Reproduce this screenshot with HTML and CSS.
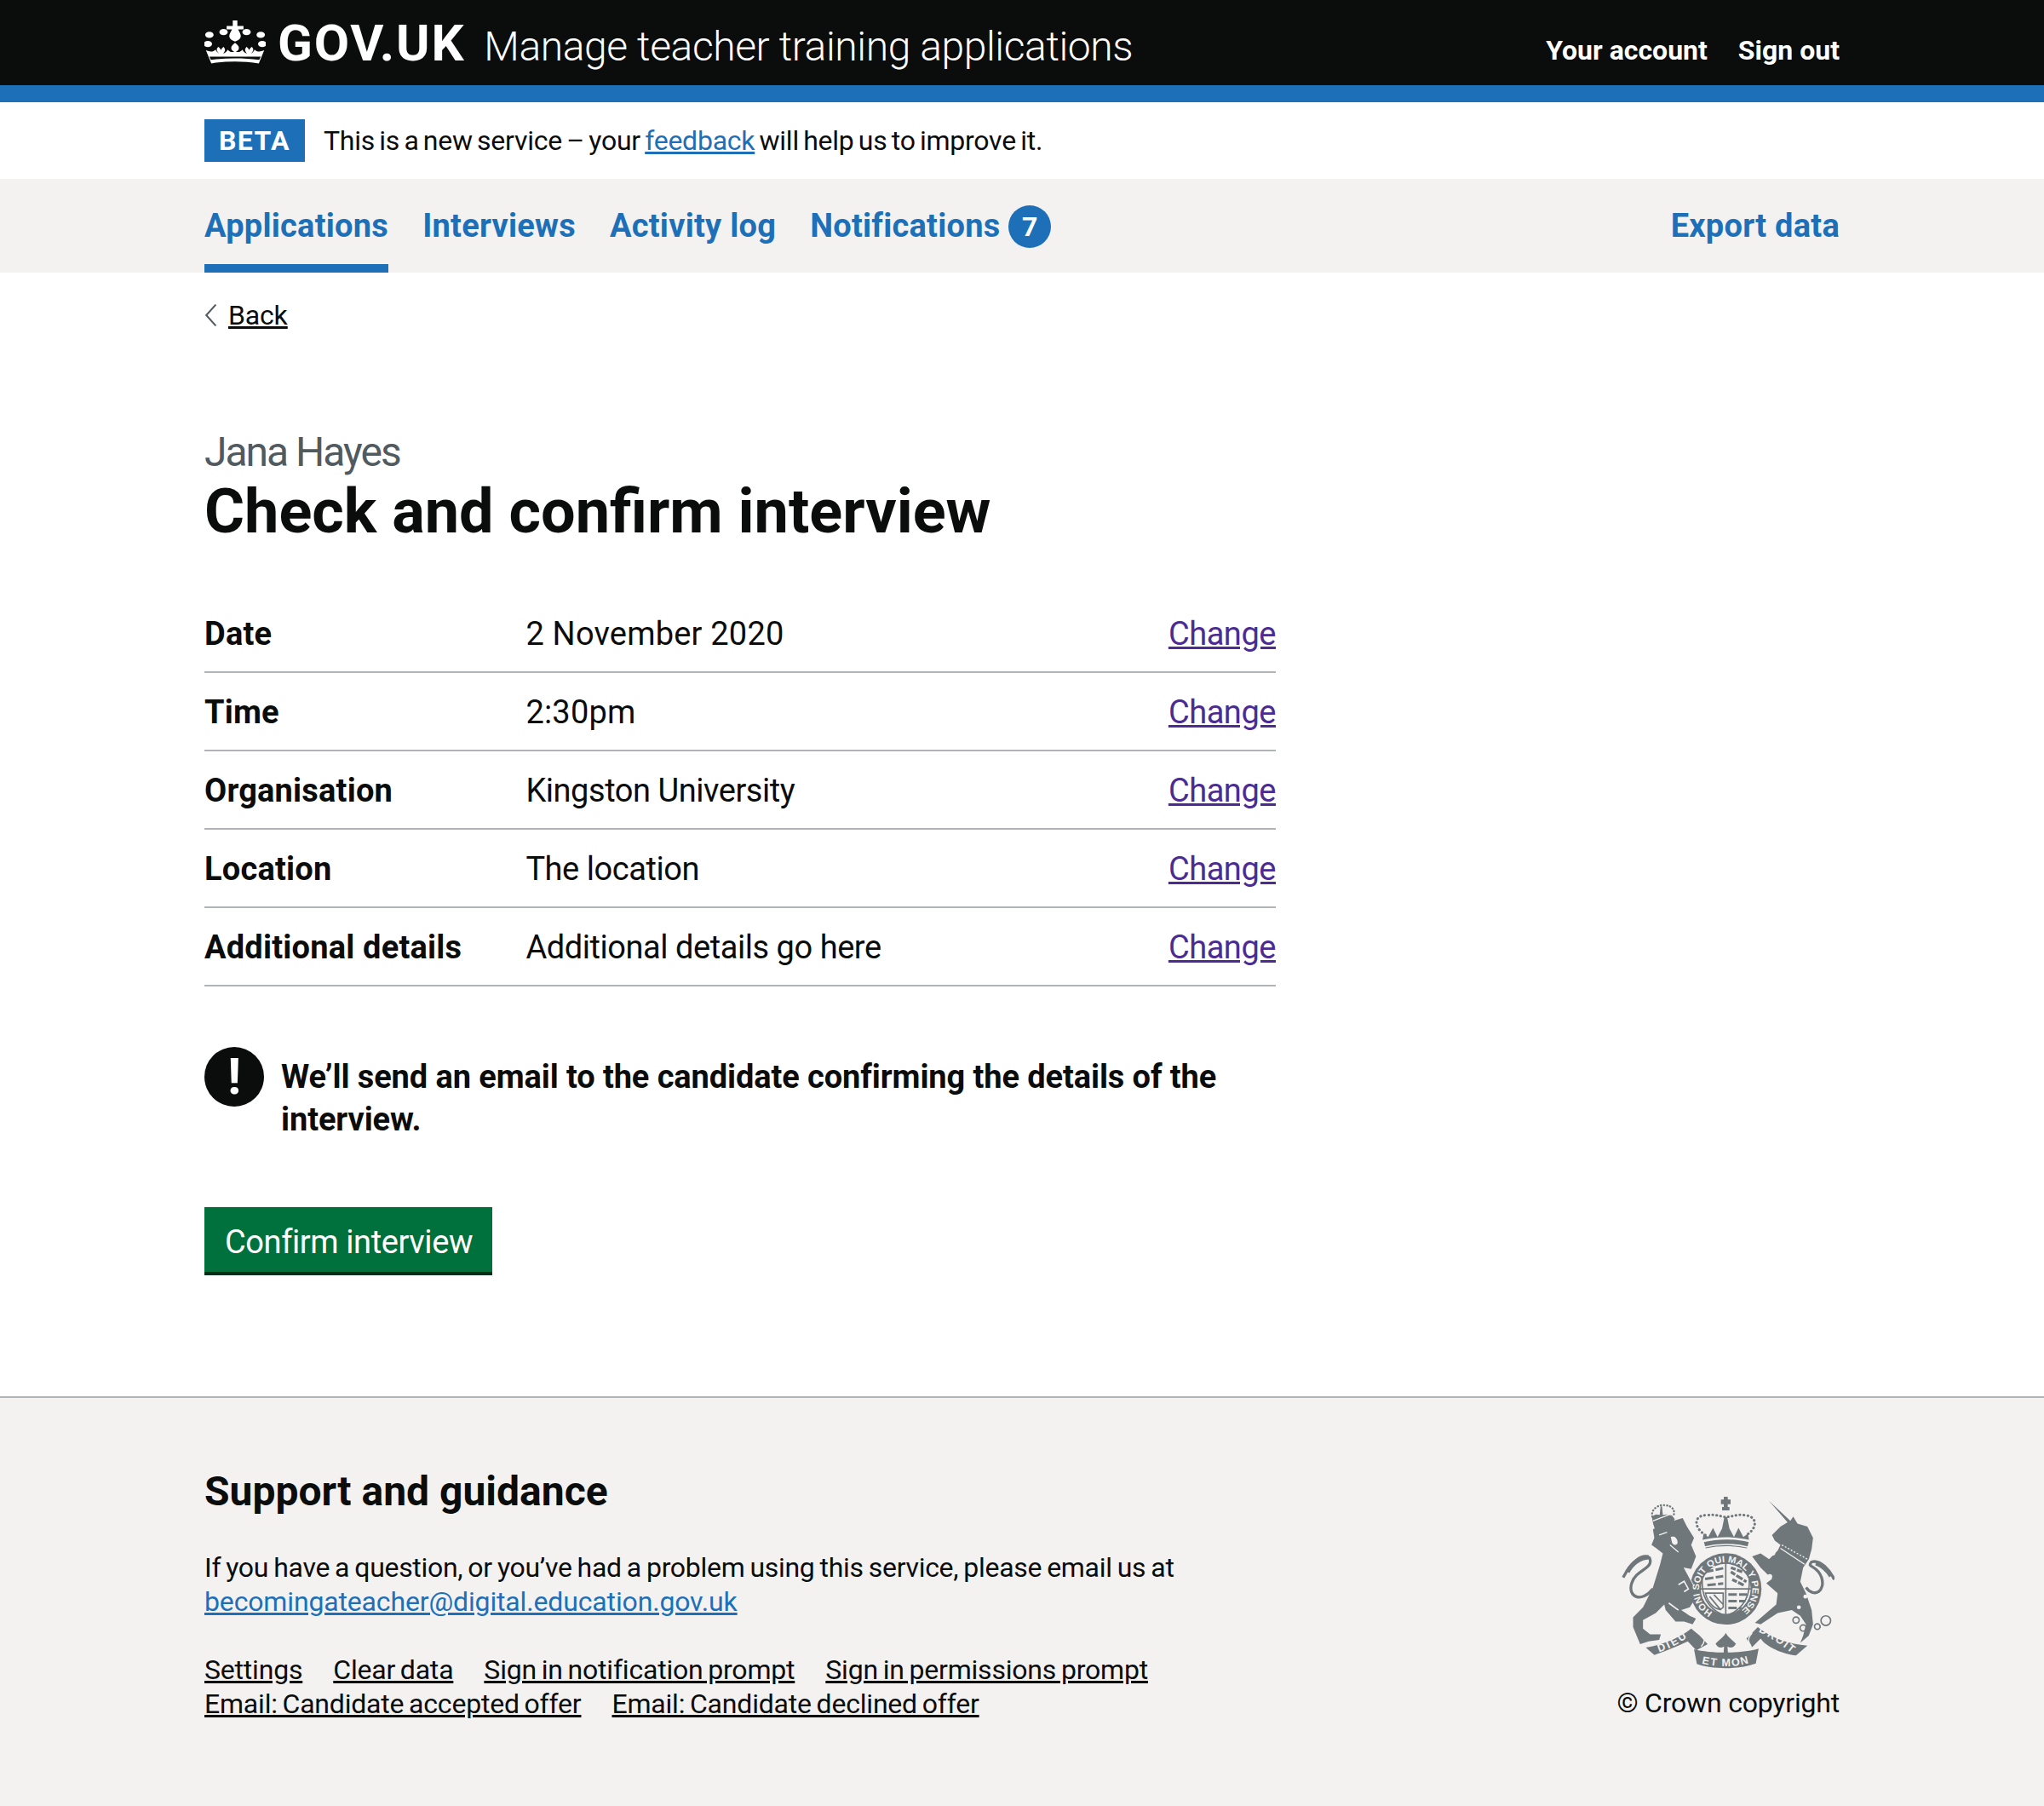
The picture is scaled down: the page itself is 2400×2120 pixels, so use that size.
FILE: index.html
```html
<!DOCTYPE html>
<html lang="en">
<head>
<meta charset="utf-8">
<title>Check and confirm interview</title>
<link rel="stylesheet" href="styles.css">
</head>
<body>
<header class="masthead">
  <div class="wrap masthead-inner">
    <a class="logo" href="#">
      <svg class="crown" viewBox="0 0 160 160" preserveAspectRatio="none" aria-hidden="true">
        <g fill="#fff">
          <path d="M74 0h12v20h16v12H88l5 14c4 12 3 22-13 30-16-8-17-18-13-30l5-14H58V20h16z"/>
          <circle cx="13" cy="52" r="11"/><circle cx="50" cy="42" r="11"/><circle cx="110" cy="42" r="11"/><circle cx="147" cy="52" r="11"/>
          <circle cx="9" cy="85" r="11"/><circle cx="151" cy="85" r="11"/>
          <path d="M18 155 4 108c10 6 20 6 25-3 3 8 6 12 9 14-4-5-9-14-2-24 5 4 6 8 7 12 1-4 3-8 7-12 7 10 3 19-1 24 5-2 9-6 12-14 4 8 10 11 17 7-6-3-8-7-8-13 0-5 3-11 10-18 7 7 10 13 10 18 0 6-2 10-8 13 7 4 13 1 17-7 3 8 7 12 12 14-4-5-8-14-1-24 4 4 6 8 7 12 1-4 2-8 7-12 7 10 2 19-2 24 3-2 6-6 9-14 5 9 15 9 25 3l-14 47c-40-9-84-9-124 0zm-1-13c41-7 85-7 126 0l4-11H13z"/>
        </g>
      </svg>
      <span class="logo-word">GOV.UK</span>
      <span class="service">Manage teacher training applications</span>
    </a>
    <nav class="account">
      <a href="#">Your account</a>
      <a href="#">Sign out</a>
    </nav>
  </div>
</header>

<div class="phase">
  <div class="wrap phase-inner">
    <strong class="tag">BETA</strong>
    <span class="phase-text">This is a new service – your <a class="link" href="#">feedback</a> will help us to improve it.</span>
  </div>
</div>

<nav class="primary">
  <div class="wrap primary-inner">
    <ul class="primary-list">
      <li><a class="primary-link current" href="#">Applications</a></li>
      <li><a class="primary-link" href="#">Interviews</a></li>
      <li><a class="primary-link" href="#">Activity log</a></li>
      <li><a class="primary-link" href="#">Notifications <span class="count">7</span></a></li>
    </ul>
    <a class="primary-link" href="#">Export data</a>
  </div>
</nav>

<div class="wrap">
  <a class="back" href="#"><svg class="chev" viewBox="0 0 12 22" aria-hidden="true"><path d="M11 .5 1.5 11 11 21.5" fill="none" stroke="#505a5f" stroke-width="1.7"/></svg><span>Back</span></a>

  <main class="content">
    <span class="caption">Jana Hayes</span>
    <h1 class="title">Check and confirm interview</h1>

    <dl class="summary">
      <div class="row"><dt>Date</dt><dd class="num">2 November 2020</dd><dd class="act"><a href="#">Change</a></dd></div>
      <div class="row"><dt>Time</dt><dd class="num">2:30pm</dd><dd class="act"><a href="#">Change</a></dd></div>
      <div class="row"><dt>Organisation</dt><dd>Kingston University</dd><dd class="act"><a href="#">Change</a></dd></div>
      <div class="row"><dt>Location</dt><dd>The location</dd><dd class="act"><a href="#">Change</a></dd></div>
      <div class="row"><dt>Additional details</dt><dd>Additional details go here</dd><dd class="act"><a href="#">Change</a></dd></div>
    </dl>

    <div class="warning">
      <span class="warn-icon">!</span>
      <strong class="warn-text">We’ll send an email to the candidate confirming the details of the interview.</strong>
    </div>

    <button class="button" type="button">Confirm interview</button>
  </main>
</div>

<footer class="footer">
  <div class="wrap footer-inner">
    <div class="footer-main">
      <h2 class="footer-title">Support and guidance</h2>
      <p class="footer-text">If you have a question, or you’ve had a problem using this service, please email us at <a class="link email" href="#">becomingateacher@digital.education.gov.uk</a></p>
      <ul class="footer-links">
        <li><a href="#">Settings</a></li>
        <li><a href="#">Clear data</a></li>
        <li><a href="#">Sign in notification prompt</a></li>
        <li><a href="#">Sign in permissions prompt</a></li>
        <li><a href="#">Email: Candidate accepted offer</a></li>
        <li><a href="#">Email: Candidate declined offer</a></li>
      </ul>
    </div>
    <div class="footer-meta">
      <svg class="crest" viewBox="130 80 750 610" role="img" aria-label="Royal coat of arms">
        <defs>
          <path id="ring" d="M451 487A94 94 0 1 1 543 487"/>
          <path id="rib1" d="M262 628C300 615 340 595 372 566"/>
          <path id="rib2" d="M412 668C470 682 530 682 582 665"/>
          <path id="rib3" d="M612 556C650 575 690 600 730 632"/>
        </defs>
        <g fill="#6f777b">
          <path d="M240 195 280 175 345 155 360 185 385 225 375 250 392 290 375 335 350 330 385 395 395 430 370 470 340 480 370 500 392 510 380 530 350 520 320 520 285 480 280 460 250 490 205 515 205 545 230 565 268 565 262 585 225 590 195 600 170 540 170 505 205 470 240 400 265 320 275 280 250 260 235 250 245 225Z"/>
          <path d="M650 95 725 165 735 150 750 175 785 185 805 225 800 265 790 300 770 330 760 380 780 420 800 480 805 530 790 570 760 595 770 570 780 530 760 500 730 480 680 490 620 530 600 525 640 490 675 460 680 420 640 385 660 370 640 350 620 330 590 290 620 280 650 300 680 270 690 250 670 235 660 215 690 185 715 170Z"/>
          <path d="M490 80h14v10h10v16h-10v10h6v12h-26v-12h6v-10h-10V90h10z"/>
          <path d="M420 240c50-12 105-12 158 0l-6 22c-48-10-98-10-146 0z"/>
          <path d="M415 232l4-22 16 12 17-32 16 32 16-30 8-40h10l8 40 16 30 16-32 17 32 16-12 4 22c-55-12-110-12-164 0z"/>
          <circle cx="497" cy="405" r="126"/>
          <path d="M236 150l14-8 14 2 3-30h5l3 30 14-2 18 4 10 12-8 20-60 22-8-24z"/>
          <path d="M215 612C280 600 330 580 375 545l30 25 28 30-40 22-30-32C320 610 270 630 245 638Z"/>
          <path d="M785 605C720 600 660 580 610 540l-40 40 20 30 30-30C640 610 700 635 745 640Z"/>
          <path d="M385 618c60 16 170 16 228-2l-10 52c-60 22-150 22-208 2z"/>
          <path d="M497 560c6 14 22 24 36 38-8 16-20 16-30 10l2 28h-16l2-28c-10 6-22 6-30-10 14-14 30-24 36-38z"/>
        </g>
        <g fill="none" stroke="#6f777b">
          <path stroke-width="10" d="M240 405C200 455 150 435 165 385 180 335 245 335 228 295 205 280 165 305 135 365"/>
          <path stroke-width="16" d="M150 345C170 310 195 295 225 293"/>
          <path stroke-width="10" d="M780 400C810 440 850 410 835 365 820 320 780 330 800 310 830 300 865 340 880 372"/>
          <path stroke-width="14" d="M815 315C840 325 855 340 868 360"/>
          <path stroke-width="9" stroke-dasharray="1 13" stroke-linecap="round" d="M425 215C385 190 380 145 430 145 470 140 490 155 497 150 510 155 530 140 565 145 610 150 610 190 570 215"/>
          <path stroke-width="7" stroke-dasharray="1 10" stroke-linecap="round" d="M238 150C230 120 270 105 280 110 310 110 320 130 312 148"/>
        </g>
        <g fill="none" stroke="#f3f2f1">
          <path stroke-width="3" d="M350 330 385 395"/>
          <path stroke-width="5" d="M418 258c50-12 110-12 160 0"/>
          <path stroke-width="4" d="M240 165 305 140M262 215 290 205M300 250 330 275M690 262 775 318"/>
          <path stroke-width="4" stroke-dasharray="6 6" d="M695 250 785 300"/>
          <path stroke-width="5" d="M330 390 350 378 365 405 350 415M296 455 330 480"/>
          <path stroke-width="4" d="M410 608c20-20 8-34-4-46M586 606c-16-20-6-34 4-46"/>
        </g>
        <g fill="#f3f2f1">
          <circle cx="497" cy="405" r="88"/>
          <circle cx="663" cy="278" r="9"/><circle cx="652" cy="362" r="9"/><circle cx="787" cy="386" r="9"/><circle cx="778" cy="432" r="7"/><circle cx="755" cy="470" r="7"/>
          <path d="M303 222c10-4 22 0 24 18 0 12-16 14-20 0z"/>
        </g>
        <g fill="none" stroke="#6f777b">
          <path stroke-width="5" d="M497 312v188M408 405h178M414 315c50-8 116-8 166 0v72c0 60-38 100-83 112-45-12-83-52-83-112z"/>
          <path stroke-width="9" stroke-dasharray="30 8" d="M424 345 488 332M424 370 488 360M432 392 488 386"/>
          <path stroke-width="10" stroke-dasharray="18 5 26 5" d="M515 345 570 380M520 372 560 392M515 330 555 345"/>
          <path stroke-width="5" d="M425 420 488 420 488 470C470 490 435 460 425 420ZM440 432 480 480M455 425 488 460"/>
          <path stroke-width="9" stroke-dasharray="30 8" d="M506 425 572 425M506 448 566 448M506 472 552 472"/>
        </g>
        <g fill="none" stroke="#6f777b" stroke-width="5">
          <circle cx="745" cy="515" r="11"/><circle cx="770" cy="543" r="11"/><circle cx="820" cy="538" r="10"/><circle cx="850" cy="517" r="17"/>
        </g>
        <g class="crest-text">
          <text font-size="32"><textPath href="#ring" textLength="482" lengthAdjust="spacingAndGlyphs">HONI SOIT QUI MAL Y PENSE</textPath></text>
          <text font-size="38"><textPath href="#rib1" textLength="112">DIEU</textPath></text>
          <text font-size="38"><textPath href="#rib2" textLength="168">ET MON</textPath></text>
          <text font-size="38"><textPath href="#rib3" textLength="140">DROIT</textPath></text>
        </g>
      </svg>
      <a class="copy" href="#">© Crown copyright</a>
    </div>
  </div>
</footer>
</body>
</html>
```

FILE: styles.css
```css
* { box-sizing: border-box; }
html, body { margin: 0; padding: 0; }
body {
  font-family: Roboto, "Noto Sans", sans-serif;
  color: #0b0c0c;
  background: #fff;
  font-size: 38px;
  line-height: 50px;
}
a { color: inherit; }
ul { list-style: none; margin: 0; padding: 0; }
.wrap { width: 1920px; margin: 0 auto; }

.masthead { background: #0b0c0c; border-bottom: 20px solid #1d70b8; height: 120px; color: #fff; }
.masthead-inner { display: flex; justify-content: space-between; height: 100px; }
.logo { display: flex; align-items: center; text-decoration: none; color: #fff; height: 100px; }
.crown { width: 72px; height: 52px; margin-right: 14px; }
.logo-word { font-weight: 700; font-size: 60px; letter-spacing: 1.8px; margin-right: 22px; margin-top: 2px; }
.service { font-size: 48px; font-weight: 300; letter-spacing: -.4px; margin-top: 9px; }
.account { display: flex; gap: 36px; font-size: 32px; font-weight: 700; align-items: center; padding-top: 17px; }
.account a { text-decoration: none; }

.phase { height: 90px; }
.phase-inner { display: flex; align-items: center; height: 90px; font-size: 32px; }
.phase-text { letter-spacing: -.25px; word-spacing: -2.4px; }
.tag { background: #1d70b8; color: #fff; font-size: 32px; letter-spacing: 1.4px; width: 118px; height: 50px; line-height: 50px; text-align: center; margin-right: 22px; }
.link { color: #1d70b8; }

.primary { background: #f3f2f1; height: 110px; }
.primary-inner { display: flex; justify-content: space-between; }
.primary-list { display: flex; gap: 40px; }
.primary-link { display: block; height: 110px; line-height: 110px; font-weight: 700; letter-spacing: .25px; color: #1d70b8; text-decoration: none; }
.current { border-bottom: 10px solid #1d70b8; }
.count { display: inline-block; width: 50px; height: 50px; line-height: 50px; text-align: center; border-radius: 50%; background: #1d70b8; color: #fff; vertical-align: middle; font-size: 32px; margin-top: -4px; }

.back { display: inline-flex; align-items: center; font-size: 32px; height: 40px; line-height: 40px; margin-top: 30px; gap: 13px; letter-spacing: -.2px; }
.chev { width: 15px; height: 26px; }
.back span { text-decoration: underline; }

.content { padding-top: 106px; padding-bottom: 142px; }
.caption { display: block; font-size: 48px; line-height: 60px; color: #505a5f; letter-spacing: -2px; }
.title { margin: 0 0 57px; font-size: 72px; line-height: 80px; font-weight: 700; }

.summary { width: 1258px; margin: 0 0 71px; }
.row { display: grid; grid-template-columns: 30% 50% 20%; border-bottom: 2px solid #b1b4b6; padding: 21px 0 19px; }
.row dt { font-weight: 700; letter-spacing: .2px; }
.row dd { margin: 0; letter-spacing: -.45px; }
.row .num { letter-spacing: .2px; }
.row .act { text-align: right; color: #4c2c92; }

.warning { display: flex; gap: 20px; width: 1258px; margin-bottom: 78px; }
.warn-icon { flex: none; width: 70px; height: 70px; border-radius: 50%; background: #0b0c0c; color: #fff; font-weight: 700; font-size: 60px; line-height: 70px; text-align: center; }
.warn-text { padding-top: 10px; letter-spacing: -.1px; }

.button { display: block; border: 0; border-bottom: 4px solid #002d18; background: #00703c; color: #fff; font: inherit; letter-spacing: -.4px; height: 80px; padding: 5px 24px 0; width: 338px; line-height: 70px; text-align: left; white-space: nowrap; }

.footer { background: #f3f2f1; border-top: 2px solid #b1b4b6; height: 481px; font-size: 32px; line-height: 40px; }
.footer-inner { display: flex; justify-content: space-between; align-items: flex-start; padding-top: 80px; }
.footer-main { width: 1280px; }
.footer-title { margin: 0 0 39px; font-size: 48px; line-height: 60px; font-weight: 700; }
.footer-text { margin: 0 0 40px; letter-spacing: -.3px; word-spacing: -1.6px; }
.email { letter-spacing: -.15px; }
.footer-links { display: flex; flex-wrap: wrap; column-gap: 36px; letter-spacing: -.2px; word-spacing: -2px; }
.footer-meta { display: flex; flex-direction: column; align-items: center; padding-top: 36px; }
.crest { width: 250px; height: 203px; margin-bottom: 19px; }
.crest-text { fill: #f3f2f1; font-family: "Liberation Sans", sans-serif; font-weight: 700; }
.copy { text-decoration: none; letter-spacing: -.2px; }
```
